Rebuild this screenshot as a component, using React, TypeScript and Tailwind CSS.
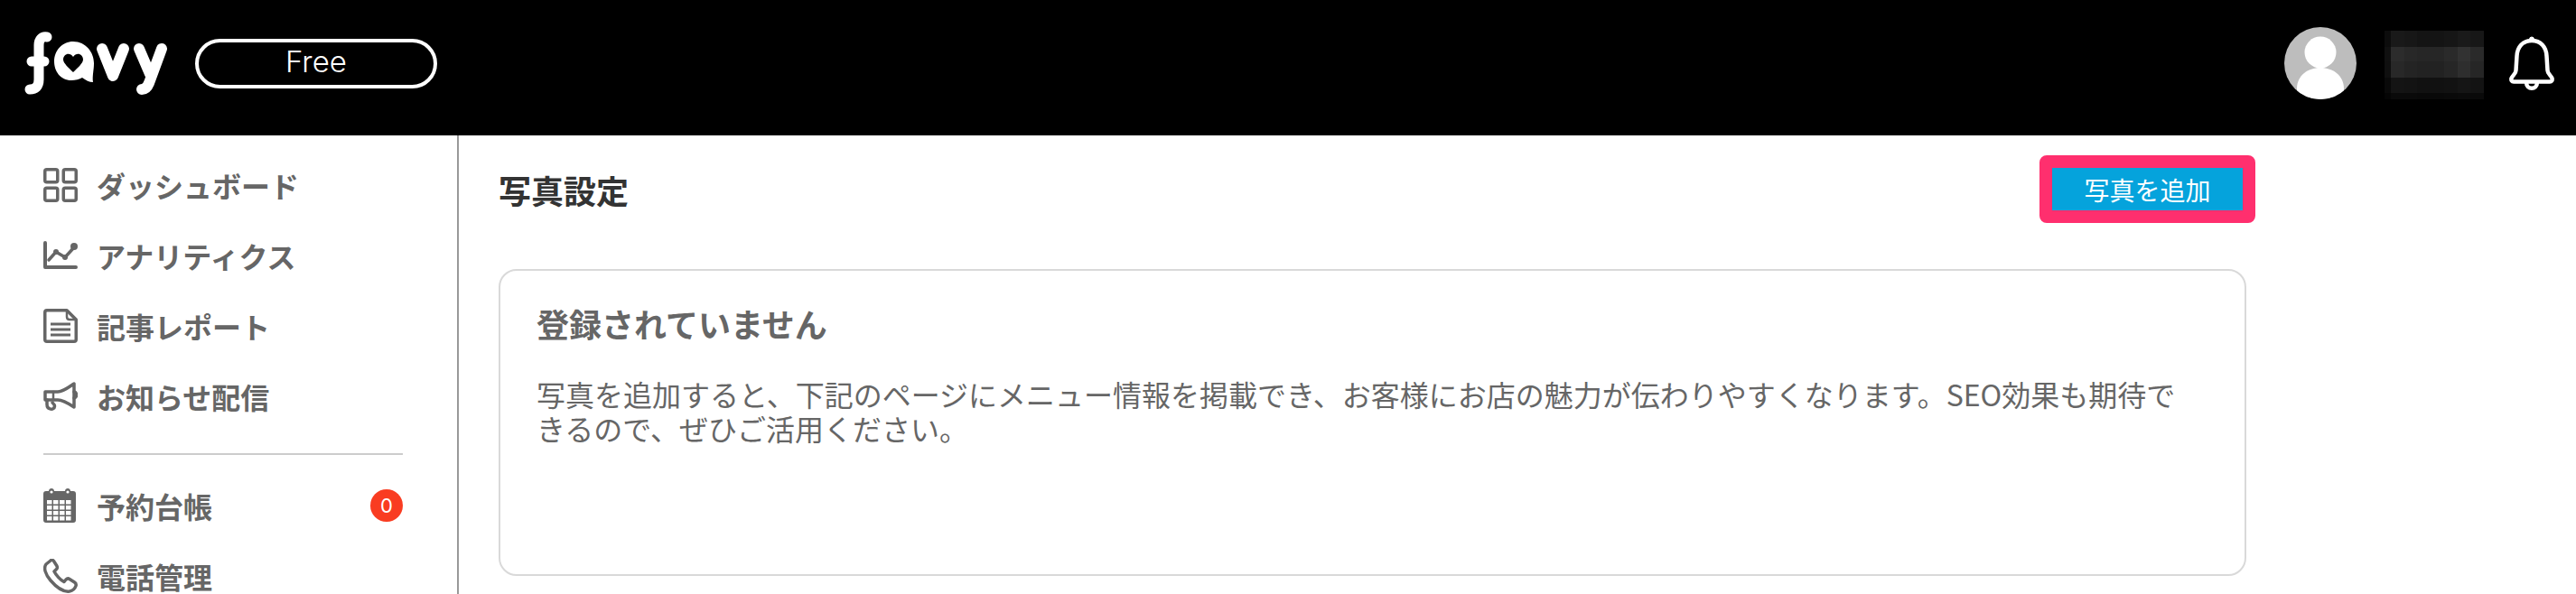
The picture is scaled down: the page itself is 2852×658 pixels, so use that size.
const jp = "font-['Noto_Sans_CJK_JP','Noto_Sans',sans-serif]";

function Logo() {
  return (
    <svg width="160" height="72" viewBox="0 0 160 72" fill="none" className="shrink-0">
      <g stroke="#fff" strokeLinecap="round" strokeLinejoin="round">
        <path d="M25 7 C19 6 16 10 16 16 L16 54 C16 62 12 65 6 65" strokeWidth="11" />
        <path d="M8 34 L22 34" strokeWidth="11" />
        <path d="M86 20 L98 50 L110 20" strokeWidth="12" />
        <path d="M127 20 L139 48" strokeWidth="12" />
        <path d="M152 20 L138 58 C136 63 133 65 130 65" strokeWidth="12" />
      </g>
      <path
        fillRule="evenodd"
        clipRule="evenodd"
        fill="#fff"
        d="M54 12 C68 12 77 24 77 36 C77 44 75 50 76 57 C72 57 68 55 64 52 C61 54 56 55 52 55 C40 55 33 45 33 34 C33 22 42 12 54 12 Z M54 29 C50 23 43 26 43 32 C43 36 49 41 54 46 C59 41 65 36 65 32 C65 26 58 23 54 29 Z"
      />
    </svg>
  );
}

function Avatar() {
  return (
    <svg width="80" height="80" viewBox="0 0 80 80" className="shrink-0">
      <defs>
        <clipPath id="av">
          <circle cx="40" cy="40" r="40" />
        </clipPath>
      </defs>
      <circle cx="40" cy="40" r="40" fill="#bdbdbd" />
      <g clipPath="url(#av)" fill="#fff">
        <circle cx="40" cy="28" r="17.5" />
        <path d="M14 80 L14 68 C14 54 26 45 40 45 C54 45 66 54 66 68 L66 80 Z" />
      </g>
    </svg>
  );
}

function Bell() {
  return (
    <svg width="50" height="60" viewBox="0 0 50 60" fill="none" stroke="#fff" strokeWidth="4.5" className="shrink-0">
      <circle cx="25" cy="3.5" r="2.5" fill="#fff" strokeWidth="1" />
      <path d="M25 5 C15 5 9 12 8.5 22 L7.5 38 C7.5 42 3 44 2.5 47 C2 49 3 50.5 5 50.5 L45 50.5 C47 50.5 48 49 47.5 47 C47 44 42.5 42 42.5 38 L41.5 22 C41 12 35 5 25 5 Z" />
      <path d="M19 51 C19 60 31 60 31 51" />
    </svg>
  );
}

function IconGrid() {
  return (
    <svg width="38" height="38" viewBox="0 0 38 38" fill="none" stroke="#666" strokeWidth="3.5">
      <rect x="1.75" y="1.75" width="14" height="14" rx="2" />
      <rect x="22.25" y="1.75" width="14" height="14" rx="2" />
      <rect x="1.75" y="22.25" width="14" height="14" rx="2" />
      <rect x="22.25" y="22.25" width="14" height="14" rx="2" />
    </svg>
  );
}

function IconChart() {
  return (
    <svg width="38" height="32" viewBox="0 0 38 32" fill="none" stroke="#666" strokeWidth="4" strokeLinejoin="round" strokeLinecap="round">
      <path d="M2 2 L2 29 L36 29" />
      <path d="M6 21 L14 12 L24 18 L35 6" strokeWidth="3.5" />
      <circle cx="14" cy="12" r="3" fill="#666" stroke="none" />
      <circle cx="24" cy="18" r="3" fill="#666" stroke="none" />
      <circle cx="34" cy="6" r="4" fill="#666" stroke="none" />
    </svg>
  );
}

function IconDoc() {
  return (
    <svg width="38" height="38" viewBox="0 0 38 38" fill="none" stroke="#666" strokeWidth="3.5" strokeLinejoin="round">
      <path d="M4 1.75 L26 1.75 L36.25 12 L36.25 34 C36.25 35.5 35.5 36.25 34 36.25 L4 36.25 C2.5 36.25 1.75 35.5 1.75 34 L1.75 4 C1.75 2.5 2.5 1.75 4 1.75 Z" />
      <path d="M26 2 L26 9 C26 11 27 12 29 12 L36 12" strokeWidth="2.5" />
      <path d="M8 17 L30 17 M8 23 L30 23 M8 29 L30 29" strokeWidth="3" />
    </svg>
  );
}

function IconMegaphone() {
  return (
    <svg width="38" height="34" viewBox="0 0 38 34" fill="none" stroke="#666" strokeWidth="3.5" strokeLinejoin="round" strokeLinecap="round">
      <path d="M2 12 L16 12 C22 12 28 7 34 3 L34 29 C28 25 22 21 16 21 L2 21 Z" />
      <path d="M11 12 L11 21" strokeWidth="2.5" />
      <path d="M34 12 C37.5 13 37.5 18 34 19" />
      <path d="M4 21 L4 26 C4 32 12 33 12.5 28 C12.5 26 11 25 10 24" />
    </svg>
  );
}

function IconCalendar() {
  return (
    <svg width="36" height="38" viewBox="0 0 36 38" fill="none">
      <path
        fill="#666"
        d="M3 3 L6 3 C6 -1 12 -1 12 3 L24 3 C24 -1 30 -1 30 3 L33 3 C35 3 36 4 36 6 L36 35 C36 37 35 38 33 38 L3 38 C1 38 0 37 0 35 L0 6 C0 4 1 3 3 3 Z"
      />
      <circle cx="9" cy="4" r="1.6" fill="#fff" />
      <circle cx="27" cy="4" r="1.6" fill="#fff" />
      <g fill="#fff">
        {[13, 19, 25, 31].map((y) =>
          [4, 11, 18, 25].map((x) => <rect key={`${x}-${y}`} x={x} y={y} width="5.5" height="4.5" />)
        )}
      </g>
    </svg>
  );
}

function IconPhone() {
  return (
    <svg width="38" height="38" viewBox="0 0 38 38" fill="none" stroke="#666" strokeWidth="3.5" strokeLinejoin="round">
      <path d="M8 2 L3 6 C0 10 2 17 8 24 C14 31 22 37 29 36 C32 35.5 35 33 36 30 C36.5 28.5 36 27 34.5 26 L29 22.5 C27.5 21.5 26 22 25 23 L23 25.5 C19 24 14 18 12 14 L14.5 11.5 C15.5 10.5 15.5 9 15 8 L11.5 2.5 C10.5 1 9 1 8 2 Z" />
    </svg>
  );
}

function NavItem({ icon, label, className = "", badge }: { icon: React.ReactNode; label: string; className?: string; badge?: string }) {
  return (
    <div className={`flex items-center h-[78px] ${className}`}>
      <div className="w-[59px] flex items-center shrink-0">{icon}</div>
      <span className="text-[32px] font-bold text-[#666] leading-none whitespace-nowrap">{label}</span>
      {badge && (
        <span className="ml-auto w-9 h-9 rounded-full bg-[#f93c21] text-white text-[22px] flex items-center justify-center font-['Inter',sans-serif]">
          {badge}
        </span>
      )}
    </div>
  );
}

const mosaicRows = [
  { h: 18, cells: ["#0c0c0c", "#191919", "#171717", "#141414", "#141414", "#161616", "#1a1a1a", "#171717"] },
  { h: 16, cells: ["#101010", "#2c2c2c", "#282828", "#262626", "#262626", "#2a2a2a", "#323232", "#2a2a2a"] },
  { h: 18, cells: ["#0f0f0f", "#282828", "#242424", "#222222", "#222222", "#262626", "#2e2e2e", "#262626"] },
  { h: 17, cells: ["#090909", "#141414", "#131313", "#111111", "#111111", "#121212", "#151515", "#131313"] },
  { h: 7, cells: ["#050505", "#0a0a0a", "#0a0a0a", "#090909", "#090909", "#0a0a0a", "#0b0b0b", "#0a0a0a"] },
];

function Mosaic() {
  return (
    <div className="w-[110px] flex flex-col">
      {mosaicRows.map((row, i) => (
        <div key={i} className="grid grid-cols-[7px_repeat(6,1fr)_1fr]" style={{ height: row.h }}>
          {row.cells.map((c, j) => (
            <div key={j} style={{ backgroundColor: c }} />
          ))}
        </div>
      ))}
    </div>
  );
}

export default function App() {
  return (
    <div className={`w-[2852px] h-[658px] overflow-hidden bg-white flex flex-col ${jp}`}>
      <header className="h-[150px] bg-black flex items-center shrink-0 pl-[27px] pr-[24px] pb-[10px]">
        <Logo />
        <div className="ml-[29px] w-[268px] h-[55px] border-4 border-white rounded-full flex items-center justify-center pb-[2px] text-white text-[33px] font-['Inter',sans-serif] font-light">
          Free
        </div>
        <div className="ml-auto flex items-center">
          <Avatar />
          <div className="ml-[31px] mt-[4px]">
            <Mosaic />
          </div>
          <div className="ml-[28px]">
            <Bell />
          </div>
        </div>
      </header>
      <div className="flex flex-1 min-h-0">
        <aside className="w-[508px] shrink-0 border-r-2 border-[#999] pl-12 pr-[60px] pt-[16px]">
          <NavItem icon={<IconGrid />} label="ダッシュボード" />
          <NavItem icon={<IconChart />} label="アナリティクス" />
          <NavItem icon={<IconDoc />} label="記事レポート" />
          <NavItem icon={<IconMegaphone />} label="お知らせ配信" />
          <div className="h-0.5 bg-[#ccc] mt-[24px] mb-[17px]" />
          <NavItem icon={<IconCalendar />} label="予約台帳" badge="0" />
          <NavItem icon={<IconPhone />} label="電話管理" />
        </aside>
        <main className="w-[1989px] pl-[44px] pt-[22px]">
          <div className="flex items-center justify-between h-[75px] pr-0">
            <h1 className="text-[36px] font-bold text-[#333] leading-none">写真設定</h1>
            <button className="w-[239px] h-[75px] rounded-lg border-[14px] border-[#ff2f6e] bg-[#05a3dc] text-white text-[28px] leading-none flex items-center justify-center">
              写真を追加
            </button>
          </div>
          <section className="mt-[51px] w-[1935px] h-[340px] border-2 border-[#d9d9d9] rounded-[20px] pl-[40px] pr-[55px] pt-[36px]">
            <h2 className="text-[36px] font-bold text-[#666] leading-[44px]">登録されていません</h2>
            <p className="mt-[37px] text-[32px] text-[#666] leading-[38px]">
              写真を追加すると、下記のページにメニュー情報を掲載でき、お客様にお店の魅力が伝わりやすくなります。SEO効果も期待できるので、ぜひご活用ください。
            </p>
          </section>
        </main>
      </div>
    </div>
  );
}
